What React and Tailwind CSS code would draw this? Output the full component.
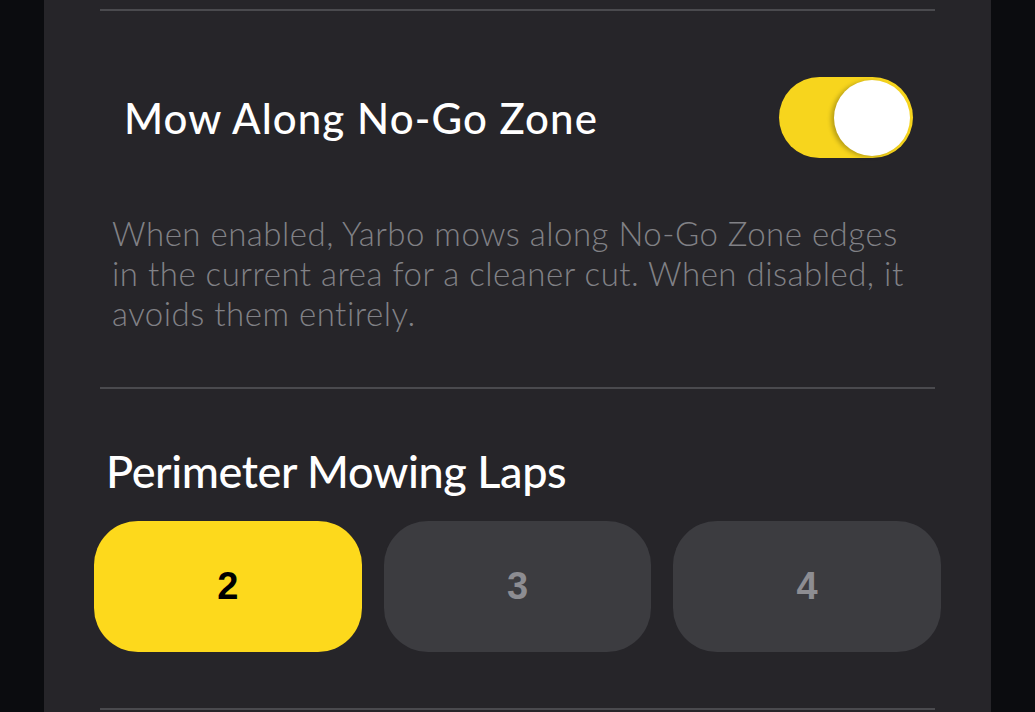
import React from "react";

const LAPS = [2, 3, 4];

const Toggle = ({ on }) => {
  return (
    <div
      className={
        "flex items-center w-[134px] h-[81px] rounded-full p-[3px] " +
        (on ? "bg-[#f7d51d] justify-end" : "bg-[#48484c] justify-start")
      }
    >
      <div className="w-[76px] h-[76px] rounded-full bg-white shadow-[-3px_1px_4px_rgba(0,0,0,0.25)]"></div>
    </div>
  );
};

const Divider = ({ className = "" }) => (
  <div className={"h-[2px] bg-[#4a4a4e] " + className}></div>
);

export default function App() {
  return (
    <div
      className="flex w-full h-[712px] overflow-hidden bg-[#0b0c0f] px-[44px]"
      style={{ fontFamily: "Lato, 'Noto Sans', sans-serif" }}
    >
      <div className="flex-1 bg-[#262529] px-[56px] pt-[9px]">
        <Divider />

        <div className="flex items-center justify-between mt-[66px] h-[81px] pl-[24px] pr-[22px]">
          <span className="text-white text-[42px] leading-none font-medium tracking-[1.1px]">
            Mow Along No-Go Zone
          </span>
          <Toggle on />
        </div>

        <p className="mt-[55px] ml-[12px] text-[33px] leading-[40px] font-light tracking-[0.5px] text-[#818186]">
          When enabled, Yarbo mows along No-Go Zone edges
          <br />
          in the current area for a cleaner cut. When disabled, it
          <br />
          avoids them entirely.
        </p>

        <Divider className="mt-[54px]" />

        <h2 className="mt-[59px] ml-[6px] text-white text-[45px] leading-[46px] font-medium tracking-[-0.4px]">
          Perimeter Mowing Laps
        </h2>

        <div className="grid grid-cols-3 gap-[22px] mt-[27px] -mx-[6px]">
          {LAPS.map((n, i) => (
            <button
              key={n}
              className={
                "h-[131px] rounded-[44px] flex items-center justify-center text-[38px] font-bold " +
                (i === 0
                  ? "bg-[#fdd91c] text-black"
                  : "bg-[#3c3c40] text-[#8d8d92]")
              }
              style={{ fontFamily: "'Liberation Sans', Arial, sans-serif" }}
            >
              {n}
            </button>
          ))}
        </div>

        <Divider className="mt-[56px]" />
      </div>
    </div>
  );
}
